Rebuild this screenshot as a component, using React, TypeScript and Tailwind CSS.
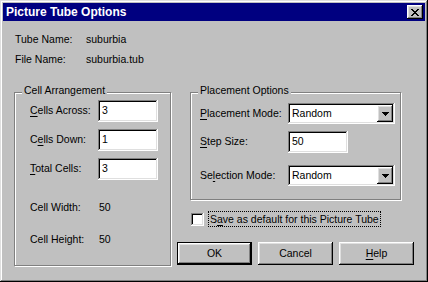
import React from "react";

const raised =
  "shadow-[inset_-1px_-1px_#000,inset_1px_1px_#fff,inset_-2px_-2px_#808080,inset_2px_2px_#dfdfdf]";
const sunken =
  "shadow-[inset_-1px_-1px_#fff,inset_1px_1px_#808080,inset_-2px_-2px_#dfdfdf,inset_2px_2px_#000]";

const U = ({ children }: { children: React.ReactNode }) => (
  <span className="underline underline-offset-[2px]">{children}</span>
);

const CloseGlyph = () => (
  <svg width="8" height="7" viewBox="0 0 8 7" shapeRendering="crispEdges">
    {Array.from({ length: 7 }).map((_, i) => (
      <g key={i} fill="#000">
        <rect x={i} y={i} width="2" height="1" />
        <rect x={6 - i} y={i} width="2" height="1" />
      </g>
    ))}
  </svg>
);

const GroupBox = ({
  title,
  className = "",
  children,
}: {
  title: string;
  className?: string;
  children: React.ReactNode;
}) => (
  <div
    className={`relative border border-[#808080] shadow-[1px_1px_0_#fff,inset_1px_1px_0_#fff] ${className}`}
  >
    <span className="absolute -top-[10px] left-[7px] bg-[#c0c0c0] px-[2px] leading-[14px]">
      {title}
    </span>
    {children}
  </div>
);

const TextField = ({ value, className = "" }: { value: string; className?: string }) => (
  <div className={`h-[22px] w-[60px] bg-white ${sunken} flex items-center pl-[4px] ${className}`}>
    {value}
  </div>
);

const Select = ({ value }: { value: string }) => (
  <div className={`h-[21px] w-[107px] bg-white ${sunken} flex items-center p-[2px]`}>
    <span className="flex-1 pl-[2px]">{value}</span>
    <div className={`h-full w-[16px] bg-[#c0c0c0] ${raised} flex items-center justify-center`}>
      <svg width="7" height="4" viewBox="0 0 7 4" shapeRendering="crispEdges">
        <path d="M0 0h7v1H0zM1 1h5v1H1zM2 2h3v1H2zM3 3h1v1H3z" fill="#000" />
      </svg>
    </div>
  </div>
);

const Button = ({ children, primary = false }: { children: React.ReactNode; primary?: boolean }) =>
  primary ? (
    <div className="h-[23px] w-[75px] border border-black">
      <div className={`h-full w-full ${raised} flex items-center justify-center`}>{children}</div>
    </div>
  ) : (
    <div className={`h-[23px] w-[75px] ${raised} flex items-center justify-center`}>{children}</div>
  );

export default function App() {
  return (
    <div
      className="w-[428px] h-[282px] bg-[#c0c0c0] p-[3px] flex flex-col text-[10.5px] text-black shadow-[inset_-1px_-1px_#000,inset_1px_1px_#dfdfdf,inset_-2px_-2px_#808080,inset_2px_2px_#fff]"
      style={{ fontFamily: '"Liberation Sans", Arial, sans-serif' }}
    >
      {/* Title bar */}
      <div className="h-[18px] bg-[#000080] flex items-center justify-between pl-[3px] pr-[2px]">
        <span className="text-white font-bold text-[12px]">Picture Tube Options</span>
        <div className={`h-[14px] w-[16px] bg-[#c0c0c0] ${raised} flex items-center justify-center`}>
          <CloseGlyph />
        </div>
      </div>

      {/* Tube info */}
      <div className="mt-[9px] pl-[12px]">
        <div className="h-[20px] flex items-center">
          <span className="w-[71px]">Tube Name:</span>
          <span>suburbia</span>
        </div>
        <div className="h-[20px] flex items-center">
          <span className="w-[71px]">File Name:</span>
          <span>suburbia.tub</span>
        </div>
      </div>

      <div className="mt-[22px] flex">
        {/* Cell Arrangement */}
        <GroupBox title="Cell Arrangement" className="ml-[11px] w-[157px] h-[174px] pt-[7px] pl-[15px]">
          <div className="flex flex-col gap-[7px]">
            <div className="flex items-center">
              <span className="w-[68px]">
                <U>C</U>ells Across:
              </span>
              <TextField value="3" />
            </div>
            <div className="flex items-center">
              <span className="w-[68px]">
                C<U>e</U>lls Down:
              </span>
              <TextField value="1" />
            </div>
            <div className="flex items-center">
              <span className="w-[68px]">
                <U>T</U>otal Cells:
              </span>
              <TextField value="3" />
            </div>
          </div>
          <div className="mt-[20px] h-[16px] flex items-center">
            <span className="w-[69px]">Cell Width:</span>
            <span>50</span>
          </div>
          <div className="mt-[16px] h-[16px] flex items-center">
            <span className="w-[69px]">Cell Height:</span>
            <span>50</span>
          </div>
        </GroupBox>

        {/* Right column */}
        <div className="ml-[6px] w-[237px] flex flex-col">
          <GroupBox title="Placement Options" className="ml-[13px] w-[211px] h-[108px] pt-[10px] pl-[9px]">
            <div className="flex items-center">
              <span className="w-[88px]">
                <U>P</U>lacement Mode:
              </span>
              <Select value="Random" />
            </div>
            <div className="mt-[7px] flex items-center">
              <span className="w-[88px]">
                <U>S</U>tep Size:
              </span>
              <TextField value="50" />
            </div>
            <div className="mt-[12px] flex items-center">
              <span className="w-[88px]">
                Se<U>l</U>ection Mode:
              </span>
              <Select value="Random" />
            </div>
          </GroupBox>

          <div className="mt-[11px] ml-[14px] h-[16px] flex items-center">
            <div className={`h-[13px] w-[13px] bg-white ${sunken}`} />
            <span className="ml-[4px] border border-dotted border-black px-[1px] leading-[14px]">
              S<U>a</U>ve as default for this Picture Tube
            </span>
          </div>

          <div className="mt-[15px] flex gap-[6px]">
            <Button primary>OK</Button>
            <Button>Cancel</Button>
            <Button>
              <span>
                <U>H</U>elp
              </span>
            </Button>
          </div>
        </div>
      </div>
    </div>
  );
}
